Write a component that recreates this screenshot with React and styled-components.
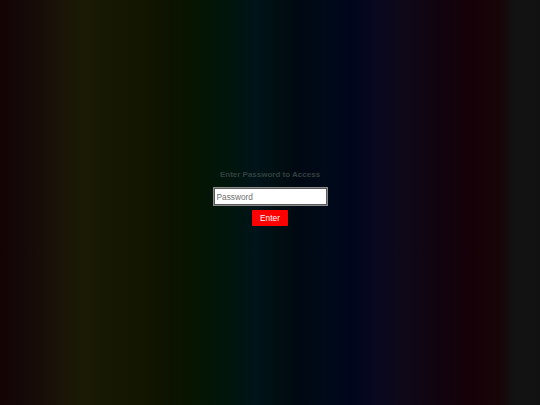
import styled, { createGlobalStyle } from "styled-components";

const GlobalStyle = createGlobalStyle`
  html, body {
    margin: 0;
    padding: 0;
    background: #000;
  }
  * {
    box-sizing: border-box;
  }
`;

const Screen = styled.main`
  display: flex;
  flex-direction: column;
  align-items: center;
  justify-content: center;
  min-height: 100vh;
  padding-bottom: 9px;
  font-family: "Liberation Sans", Arial, sans-serif;
  background: linear-gradient(
    to right,
    #140404 0px,
    #150808 22px,
    #180e08 42px,
    #1a1406 62px,
    #1b1a05 82px,
    #151702 112px,
    #121500 145px,
    #0c1300 168px,
    #081400 188px,
    #021508 215px,
    #001510 240px,
    #00141a 255px,
    #000f12 275px,
    #000812 298px,
    #000a18 325px,
    #00051c 350px,
    #080820 375px,
    #0f0818 405px,
    #100410 435px,
    #160008 470px,
    #170508 500px,
    #121212 515px,
    #111111 540px
  );
`;

const Title = styled.h2`
  margin: 0 0 8px;
  font-size: 8px;
  font-weight: bold;
  color: #33403f;
`;

const Form = styled.form`
  display: flex;
  flex-direction: column;
  align-items: center;
  gap: 4px;
`;

const PasswordInput = styled.input`
  width: 115px;
  height: 19px;
  padding: 0 3px;
  border: 1px solid #8a8a8a;
  outline: 1px solid #5a5a5a;
  outline-offset: -2px;
  background: #fff;
  font-family: "Liberation Sans", Arial, sans-serif;
  font-size: 8.3px;
  color: #222;

  &::placeholder {
    color: #6f6f6f;
  }
`;

const EnterButton = styled.button`
  width: 36px;
  height: 16px;
  padding: 0;
  border: none;
  border-radius: 1px;
  background: #ff0000;
  color: #fff;
  font-family: "Liberation Sans", Arial, sans-serif;
  font-size: 8.3px;
  cursor: pointer;
`;

function App() {
  return (
    <>
      <GlobalStyle />
      <Screen>
        <Title>Enter Password to Access</Title>
        <Form onSubmit={(e) => e.preventDefault()}>
          <PasswordInput type="password" placeholder="Password" />
          <EnterButton type="submit">Enter</EnterButton>
        </Form>
      </Screen>
    </>
  );
}

export default App;
